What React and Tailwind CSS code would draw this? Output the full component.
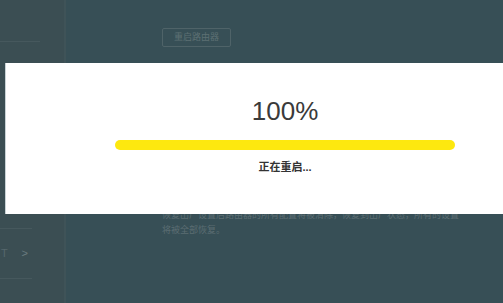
import React from 'react'

const App = () => {
    return (
        <div className="relative w-[503px] h-[303px] overflow-hidden bg-[#374f56] flex" style={{ fontFamily: '"Liberation Sans", "Noto Sans CJK SC", sans-serif' }}>
            {/* dimmed sidebar */}
            <aside className="w-[66px] h-full bg-[#3b4e53] border-r-2 border-[#3f5358] flex flex-col">
                <div className="h-[42px] w-[40px] border-b border-[#46585d]"></div>
                <div className="mt-[186px] w-[32px] border-t border-[#46585d]"></div>
                <div className="h-[50px] w-[32px] border-b border-[#46585d] flex items-center justify-end pr-[4px] text-[11px] text-[#6a7b7f]">
                    <span className="mr-auto pl-[1px] text-[#56676c]">T</span>&gt;
                </div>
            </aside>

            {/* dimmed page content */}
            <main className="flex-1 pl-[96px] pt-[28px]">
                <div className="w-[69px] h-[19px] border border-[#4f6368] rounded-[2px] flex items-center justify-center text-[9px] text-[#5d6f73]">
                    重启路由器
                </div>
                <div className="mt-[161px] text-[9px] leading-[15px] text-[#5b6d72] whitespace-nowrap">
                    <p>恢复出厂设置后路由器的所有配置将被清除，恢复到出厂状态，所有的设置</p>
                    <p>将被全部恢复。</p>
                </div>
            </main>

            {/* restart modal */}
            <div className="absolute left-[5px] right-0 top-[63px] h-[151px] bg-white border-l border-[#c9d3d6] flex flex-col items-center">
                <div className="mt-[33px] ml-[61px] text-[26px] leading-[30px] text-[#3a3a3a]">100%</div>
                <div className="mt-[14px] ml-[61px] w-[340px] h-[10px] rounded-full bg-[#fde80f]"></div>
                <div className="mt-[9px] ml-[61px] text-[11px] font-bold text-[#333]">正在重启...</div>
            </div>
        </div>
    )
}

export default App
